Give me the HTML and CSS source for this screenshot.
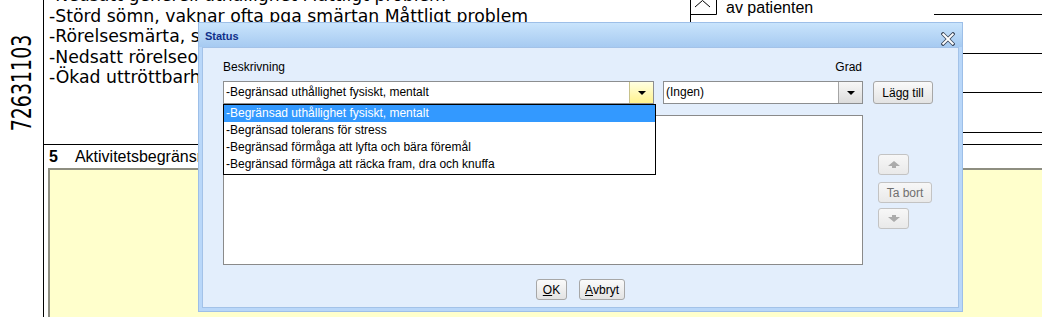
FILE: index.html
```html
<!DOCTYPE html>
<html lang="sv">
<head>
<meta charset="utf-8">
<title>Status</title>
<link rel="stylesheet" href="styles.css">
</head>
<body>
<div class="doc">
  <div class="side"><span class="docnum">72631103</span></div>
  <div class="main">
    <div class="upper">
      <div class="notes">
        <div class="note first">-Nedsatt generell uthållighet Måttligt problem</div>
        <div class="note">-Störd sömn, vaknar ofta pga smärtan Måttligt problem</div>
        <div class="note">-Rörelsesmärta, stelhet Måttligt problem</div>
        <div class="note">-Nedsatt rörelseomfång Måttligt problem</div>
        <div class="note">-Ökad uttröttbarhet Måttligt problem</div>
      </div>
      <div class="rightcol">
        <div class="rrow-first">
          <svg class="chk" width="27" height="15" viewBox="0 0 27 15"><path d="M0.5 0 V14.5 H26.5 V0" fill="none" stroke="#000" stroke-width="1"/><path d="M5 7 L12.5 0.5 L20 7" fill="none" stroke="#000" stroke-width="1"/></svg>
          <span class="chklabel">av patienten</span>
          <span class="fill"></span>
        </div>
        <div class="rrow"></div>
        <div class="rrow"></div>
        <div class="rrow last"></div>
      </div>
    </div>
    <div class="sect"><b>5</b><span class="sect-title">Aktivitetsbegränsningar</span></div>
    <div class="yellow"></div>
  </div>
</div>

<div class="dialog">
  <div class="titlebar">
    <span class="title">Status</span>
    <svg class="close" width="14" height="14" viewBox="0 0 14 14"><path d="M2 2 L12 12 M12 2 L2 12" stroke="#3f4b5e" stroke-width="3.6" stroke-linecap="square"/><path d="M2.3 2.3 L11.7 11.7 M11.7 2.3 L2.3 11.7" stroke="#fff" stroke-width="2" stroke-linecap="square"/></svg>
  </div>
  <div class="panel">
    <div class="labels"><span>Beskrivning</span><span class="grad">Grad</span></div>
    <div class="combos">
      <div class="combo combo-desc">
        <span class="combo-text">-Begränsad uthållighet fysiskt, mentalt</span>
        <span class="combo-btn hot"><span class="tri"></span></span>
        <div class="droplist">
          <div class="item sel">-Begränsad uthållighet fysiskt, mentalt</div>
          <div class="item">-Begränsad tolerans för stress</div>
          <div class="item">-Begränsad förmåga att lyfta och bära föremål</div>
          <div class="item">-Begränsad förmåga att räcka fram, dra och knuffa</div>
        </div>
      </div>
      <div class="combo combo-grad">
        <span class="combo-text">(Ingen)</span>
        <span class="combo-btn"><span class="tri"></span></span>
      </div>
      <button class="btn btn-add">Lägg till</button>
    </div>
    <div class="listrow">
      <div class="listbox"></div>
      <div class="sidebtns">
        <button class="btn dis btn-arrow"><svg width="12" height="8" viewBox="0 0 12 8"><path d="M6 0 L12 5 H8 V7 H4 V5 H0 Z" fill="#ababab"/></svg></button>
        <button class="btn dis btn-del">Ta bort</button>
        <button class="btn dis btn-arrow down"><svg width="12" height="8" viewBox="0 0 12 8"><path d="M4 0 H8 V2 H12 L6 7 L0 2 H4 Z" fill="#ababab"/></svg></button>
      </div>
    </div>
    <div class="footer">
      <button class="btn btn-ok"><u>O</u>K</button>
      <button class="btn btn-cancel"><u>A</u>vbryt</button>
    </div>
  </div>
</div>
</body>
</html>
```
FILE: styles.css
```css
html, body {
  margin: 0;
  padding: 0;
}
body {
  width: 1042px;
  height: 317px;
  overflow: hidden;
  position: relative;
  background: #fff;
  font-family: "Liberation Sans", Arial, sans-serif;
  color: #000;
}

/* ---------- background document ---------- */
.doc {
  display: flex;
  height: 317px;
}
.side {
  width: 44px;
  flex: none;
  box-sizing: border-box;
  border-right: 1px solid #000;
  display: flex;
  flex-direction: column;
  align-items: center;
  padding-top: 68px;
}
.docnum {
  font-family: "DejaVu Sans", sans-serif;
  font-size: 26px;
  line-height: 30px;
  white-space: nowrap;
  transform: rotate(-90deg) scaleX(0.73);
  margin-left: 2px;
}
.main {
  flex: 1;
  min-width: 0;
  display: flex;
  flex-direction: column;
}
.upper {
  height: 144px;
  flex: none;
  border-bottom: 1px solid #000;
  display: flex;
}
.notes {
  width: 646px;
  flex: none;
  box-sizing: border-box;
  padding-left: 5px;
  overflow: hidden;
  font-family: "DejaVu Sans", sans-serif;
  font-size: 17.3px;
  line-height: 20.5px;
  white-space: nowrap;
}
.note.first {
  margin-top: -15px;
}
.rightcol {
  flex: 1;
  border-left: 1px solid #000;
}
.rrow-first {
  height: 15px;
  display: flex;
  align-items: flex-start;
}
.chk {
  display: block;
  margin-left: -1px;
  flex: none;
}
.chklabel {
  font-size: 16px;
  line-height: 18px;
  margin-top: -1px;
  margin-left: 9px;
  white-space: nowrap;
}
.fill {
  margin-left: auto;
  width: 108px;
  height: 14px;
  border-bottom: 1px solid #000;
  flex: none;
}
.rrow {
  height: 38px;
  margin-left: 243px;
  border-bottom: 1px solid #000;
}
.rrow.last {
  height: 39px;
}
.sect {
  height: 23px;
  flex: none;
  display: flex;
  padding-left: 5px;
  font-size: 16px;
  line-height: 23px;
  white-space: nowrap;
}
.sect-title {
  margin-left: 17px;
}
.yellow {
  flex: 1;
  margin-left: 4px;
  border-left: 2px solid #8e8e80;
  border-top: 2px solid #8e8e80;
  background: #ffffcc;
}

/* ---------- dialog ---------- */
.dialog {
  position: absolute;
  left: 198px;
  top: 22px;
  width: 765px;
  height: 290px;
  box-sizing: border-box;
  border: 1px solid #9dbfe8;
  background: #b9d7f9;
  display: flex;
  flex-direction: column;
  font-size: 12px;
}
.titlebar {
  height: 24px;
  flex: none;
  box-sizing: border-box;
  background: linear-gradient(#c9e4fc, #a6caf1);
  display: flex;
  align-items: flex-start;
  justify-content: space-between;
  padding: 7px 7px 0 6px;
}
.title {
  font-weight: bold;
  font-size: 11px;
  line-height: 13px;
  color: #10308a;
}
.close {
  display: block;
  margin-top: 2px;
}
.panel {
  flex: 1;
  margin: 0 3px 3px 3px;
  border: 1px solid #a3c2e8;
  background: #e3eefc;
  display: flex;
  flex-direction: column;
}
.labels {
  margin: 12px 0 0 20px;
  width: 640px;
  height: 14px;
  line-height: 14px;
  display: flex;
  justify-content: space-between;
}
.grad {
  padding-right: 1px;
}
.combos {
  margin: 7px 0 0 20px;
  display: flex;
  align-items: flex-start;
}
.combo {
  position: relative;
  height: 23px;
  box-sizing: border-box;
  border: 1px solid #8c8e90;
  background: #fff;
  display: flex;
}
.combo-desc {
  width: 431px;
}
.combo-grad {
  width: 200px;
  margin-left: 9px;
}
.combo-text {
  flex: 1;
  padding-left: 2px;
  line-height: 21px;
  white-space: nowrap;
  overflow: hidden;
}
.combo-btn {
  width: 23px;
  flex: none;
  border-left: 1px solid #a5a5a5;
  background: linear-gradient(#f7f7f7, #dcdcdc);
  display: flex;
  align-items: center;
  justify-content: center;
}
.combo-btn.hot {
  border-left-color: #c8c28a;
  background: linear-gradient(#ffffe2, #fff38e);
}
.tri {
  width: 0;
  height: 0;
  border-left: 4px solid transparent;
  border-right: 4px solid transparent;
  border-top: 4px solid #000;
  margin-top: 1px;
}
.droplist {
  position: absolute;
  left: -1px;
  top: 22px;
  width: 433px;
  box-sizing: border-box;
  border: 1px solid #000;
  background: #fff;
  padding-bottom: 1px;
  z-index: 2;
}
.item {
  height: 17px;
  line-height: 17px;
  padding-left: 2px;
  white-space: nowrap;
}
.item.sel {
  background: #3399ff;
  color: #fff;
}
.btn {
  font-family: "Liberation Sans", Arial, sans-serif;
  font-size: 12px;
  color: #000;
  height: 23px;
  box-sizing: border-box;
  border: 1px solid #a7a7a7;
  border-radius: 3px;
  background: linear-gradient(#fafafa, #e3e3e3);
  padding: 0;
  margin: 0;
  display: flex;
  align-items: center;
  justify-content: center;
}
.btn-add {
  width: 60px;
  margin-left: 10px;
}
.listrow {
  margin: 11px 0 0 20px;
  display: flex;
  align-items: flex-start;
}
.listbox {
  width: 640px;
  height: 150px;
  box-sizing: border-box;
  border: 1px solid #8a8a8a;
  background: #fff;
}
.sidebtns {
  margin-left: 15px;
  padding-top: 39px;
  display: flex;
  flex-direction: column;
  align-items: flex-start;
}
.btn.dis {
  height: 21px;
  border-color: #c3c3c3;
  background: linear-gradient(#f7f7f7, #e9e9e9);
  color: #6f6f6f;
}
.btn-arrow {
  width: 31px;
}
.btn-arrow svg {
  display: block;
}
.btn-del {
  width: 54px;
  margin-top: 7px;
}
.btn-arrow.down {
  margin-top: 5px;
}
.footer {
  margin-top: 14px;
  display: flex;
  justify-content: center;
  gap: 12px;
}
.btn-ok,
.btn-cancel {
  height: 21px;
}
.btn-ok {
  width: 31px;
}
.btn-cancel {
  width: 46px;
}
```
